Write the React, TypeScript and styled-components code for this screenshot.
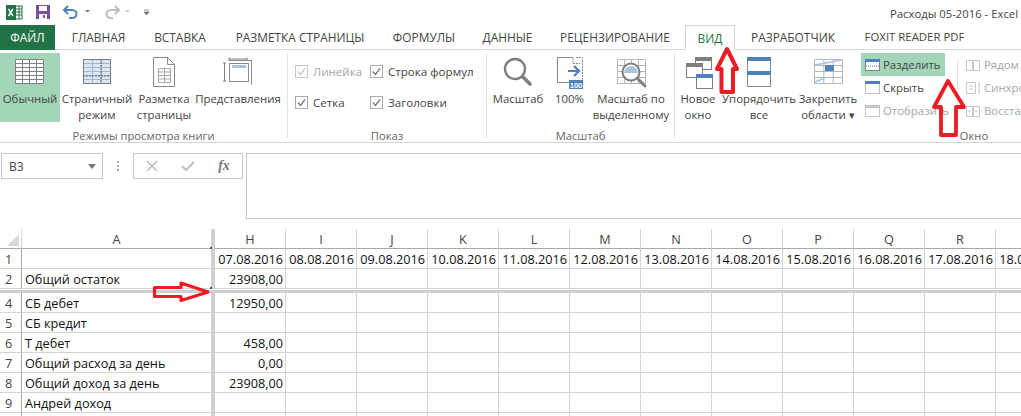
import React from "react";
import styled, { createGlobalStyle } from "styled-components";

const Global = createGlobalStyle`
  html, body { margin: 0; padding: 0; background: #fff; }
  * { box-sizing: border-box; }
`;
const Page = styled.div`
  position: relative; width: 1021px; height: 416px; overflow: hidden; background: #fff;
  font-family: "Open Sans", "Liberation Sans", sans-serif; color: #444;
`;
const TitleBar = styled.div`
  height: 25px; display: flex; align-items: center; padding: 0 3px 0 6px;
`;
const Qat = styled.svg`width: 150px; height: 24px; flex: none;`;
const DocTitle = styled.div`margin-left: auto; font-size: 11.3px; color: #444; padding-top: 1px;`;
const Tabs = styled.div`
  height: 25px; display: flex; border-bottom: 1px solid #d4d4d4; position: relative;
`;
const Tab = styled.div<{ $w: number; $fs?: number; $active?: boolean; $file?: boolean }>`
  width: ${p => p.$w}px; flex: none; text-align: center; font-size: ${p => p.$fs ?? 11.9}px; line-height: 24px;
  color: ${p => (p.$file ? "#fff" : p.$active ? "#217346" : "#444")};
  background: ${p => (p.$file ? "#217346" : "#fff")};
  ${p => p.$file && "height: 25px;"}
  ${p => p.$active && "margin-left: 4px; height: 25px; border: 1px solid #d4d4d4; border-bottom-color: #fff;"}
`;
const Ribbon = styled.div`
  height: 93px; display: flex; border-bottom: 1px solid #d4d4d4; padding-top: 3px; overflow: hidden;
`;
const Group = styled.div<{ $w: number; $last?: boolean }>`
  width: ${p => p.$w}px; flex: none; position: relative; display: flex; flex-direction: column;
  ${p => !p.$last && "border-right: 1px solid #e1e1e1; margin-bottom: 4px;"}
`;
const GroupBody = styled.div`flex: none; height: 75px; display: flex;`;
const GroupLabel = styled.div`
  text-align: center; font-size: 11.2px; line-height: 14px; color: #666; margin-top: 1px;
`;
const Big = styled.div<{ $w: number; $on?: boolean }>`
  width: ${p => p.$w}px; height: 69px; flex: none; text-align: center;
  font-size: 11.4px; line-height: 16px; color: #444; white-space: nowrap;
  background: ${p => (p.$on ? "#a3d6b8" : "transparent")};
  display: flex; flex-direction: column; align-items: center;
`;
const BigIcon = styled.svg`width: 34px; height: 36px; flex: none; margin-bottom: 2px;`;
const Checks = styled.div<{ $w: number }>`
  width: ${p => p.$w}px; flex: none; display: flex; flex-direction: column; gap: 9px; padding: 7px 0 0 7px;
`;
const CheckRow = styled.div<{ $off?: boolean }>`
  display: flex; align-items: center; gap: 5px; height: 22px; font-size: 11.6px; white-space: nowrap;
  color: ${p => (p.$off ? "#a6a6a6" : "#444")};
`;
const Box = styled.svg`width: 13px; height: 13px; flex: none;`;
const SmallCol = styled.div<{ $w: number; $ml?: number }>`
  width: ${p => p.$w}px; margin-left: ${p => p.$ml ?? 0}px; flex: none; display: flex; flex-direction: column;
`;
const Small = styled.div<{ $on?: boolean; $off?: boolean }>`
  height: 23px; display: flex; align-items: center; gap: 2px; padding-left: 3px; font-size: 11.4px; white-space: nowrap;
  background: ${p => (p.$on ? "#a3d6b8" : "transparent")};
  color: ${p => (p.$off ? "#a6a6a6" : "#444")};
`;
const SmallIcon = styled.svg`width: 17px; height: 16px; flex: none;`;
const Divider = styled.div`width: 1px; height: 62px; background: #e1e1e1; margin: 7px 0 0 12px; flex: none;`;

const FormulaBar = styled.div`
  margin-top: 10px; height: 65px; display: flex; align-items: flex-start; padding-left: 1px;
`;
const NameBox = styled.div`
  width: 102px; height: 26px; border: 1px solid #c6c6c6; display: flex; align-items: center; padding: 0 5px 0 7px;
  font-size: 12px; color: #444; justify-content: space-between;
`;
const Caret = styled.i`
  width: 0; height: 0; border: 4px solid transparent; border-top: 5px solid #777; border-bottom: 0; margin-right: 1px;
`;
const Dots = styled.div`
  width: 30px; height: 26px; display: flex; flex-direction: column; align-items: center; justify-content: center; gap: 2px;
  i { width: 2px; height: 2px; background: #a6a6a6; display: block; }
`;
const FxBox = styled.div`
  width: 110px; height: 26px; border: 1px solid #c6c6c6; display: flex;
`;
const FxBtn = styled.div`
  flex: 1; display: flex; align-items: center; justify-content: center;
  font-family: "Liberation Serif", serif; font-style: italic; font-weight: 700; font-size: 14px; color: #777;
`;
const FormulaInput = styled.div`
  margin-left: 3px; flex: 1; height: 66px; border: 1px solid #c6c6c6; border-right: 0;
`;
const Sheet = styled.div`margin-top: 11px;`;
const Row = styled.div`display: flex; height: 20px;`;
const Cell = styled.div<{ $w: number; $right?: boolean }>`
  width: ${p => p.$w}px; flex: none; padding: 0 2px 0 3px; white-space: nowrap;
  font-size: 12.7px; line-height: 21px; color: #111;
  border-right: 1px solid #d4d4d4; border-bottom: 1px solid #d4d4d4;
  text-align: ${p => (p.$right ? "right" : "left")};
`;
const ColHead = styled.div<{ $w: number }>`
  width: ${p => p.$w}px; flex: none; text-align: center; font-size: 12.7px; line-height: 20px; color: #444;
  border-right: 1px solid #d4d4d4; border-bottom: 1px solid #a9a9a9;
`;
const RowHead = styled.div`
  width: 22px; flex: none; padding-left: 5px; font-size: 12.7px; line-height: 21px; color: #444;
  border-right: 1px solid #a9a9a9; border-bottom: 1px solid #d4d4d4;
`;
const Corner = styled.div`
  width: 22px; flex: none; border-right: 1px solid #d4d4d4; border-bottom: 1px solid #a9a9a9; position: relative;
  &::after { content: ""; position: absolute; right: 2px; bottom: 2px; border: 6px solid transparent;
    border-right-color: #d9d9d9; border-bottom-color: #d9d9d9; }
`;
const VSplit = styled.div`width: 3px; flex: none; background: #d0d0d0;`;
const HSplit = styled.div`height: 4px; background: #d0d0d0; border-top: 1px solid #fff;`;
const Arrow = styled.svg`position: absolute; left: 0; top: 0; width: 1021px; height: 416px; pointer-events: none;`;

const W = [71, 71, 71, 71, 71, 71, 71, 71, 71, 71, 71, 71, 71, 71];
const COLS = ["H", "I", "J", "K", "L", "M", "N", "O", "P", "Q", "R", ""];
const DATES = ["07", "08", "09", "10", "11", "12", "13", "14", "15", "16", "17", "18"];
const TABS: [string, number][] = [["ГЛАВНАЯ", 87], ["ВСТАВКА", 76], ["РАЗМЕТКА СТРАНИЦЫ", 164], ["ФОРМУЛЫ", 84], ["ДАННЫЕ", 83], ["РЕЦЕНЗИРОВАНИЕ", 132]];

const Check = ({ off }: { off?: boolean }) => (
  <Box viewBox="0 0 13 13">
    <rect x=".5" y=".5" width="12" height="12" fill="#fff" stroke={off ? "#c6c6c6" : "#ababab"} />
    <path d="M3 6.5l2.5 3L10 3.5" fill="none" stroke={off ? "#c6c6c6" : "#777"} strokeWidth="1.3" />
  </Box>
);
const gridLines = (x0: number, y0: number, w: number, h: number, nx: number, ny: number) => {
  let d = "";
  for (let i = 0; i <= nx; i++) d += `M${x0 + (w * i) / nx} ${y0}v${h}`;
  for (let j = 0; j <= ny; j++) d += `M${x0} ${y0 + (h * j) / ny}h${w}`;
  return d;
};
const Win = ({ x, y, w, h, c = "#4f81bd", fill = "#fff" }: any) => (
  <g>
    <rect x={x + .5} y={y + .5} width={w} height={h} fill={fill} stroke="#7f7f7f" />
    <rect x={x} y={y} width={w + 1} height="4" fill={c} />
  </g>
);

export default function App() {
  const rows: [string, string, string][] = [
    ["2", "Общий остаток", "23908,00"],
  ];
  const lower: [string, string, string][] = [
    ["4", "СБ дебет", "12950,00"], ["5", "СБ кредит", ""], ["6", "Т дебет", "458,00"],
    ["7", "Общий расход за день", "0,00"], ["8", "Общий доход за день", "23908,00"], ["9", "Андрей доход", ""],
  ];
  const renderRow = ([n, a, h]: [string, string, string]) => (
    <Row key={n}>
      <RowHead>{n}</RowHead>
      <Cell $w={190}>{a}</Cell>
      <VSplit />
      <Cell $w={71} $right>{h}</Cell>
      {W.slice(1).map((w, i) => <Cell $w={w} key={i} />)}
    </Row>
  );
  return (
    <Page>
      <Global />
      <TitleBar>
        <Qat viewBox="0 0 150 24">
          <rect x="6" y="5" width="10" height="13" fill="#fff" stroke="#217346" />
          <path d="M10 8h6M10 11h6M10 14h6M13 5v13" stroke="#217346" strokeWidth="1" />
          <rect x="0" y="4" width="10" height="15" fill="#217346" />
          <path d="M2.5 8l4.5 7M7 8l-4.5 7" stroke="#fff" strokeWidth="1.5" />
          <rect x="30" y="4" width="14" height="14" fill="#7d4f9f" />
          <rect x="33" y="5" width="8" height="5" fill="#fff" />
          <rect x="33" y="13" width="8" height="5" fill="#fff" />
          <rect x="37" y="14" width="2" height="3" fill="#7d4f9f" />
          <path d="M62 5l-4 4 4 4M58 9h8c6 0 6 8 0 8h-3" fill="none" stroke="#4f81bd" strokeWidth="2" />
          <path d="M79 9h5l-2.500 2.500z" fill="#777" />
          <path d="M109 5l4 4-4 4M113 9h-8c-6 0-6 8 0 8h2" fill="none" stroke="#bdbdbd" strokeWidth="2" />
          <path d="M119 9h5l-2.500 2.500z" fill="#c6c6c6" />
          <path d="M138 9h5M138 11h5l-2.500 3z" stroke="#777" fill="#777" strokeWidth=".8" />
        </Qat>
        <DocTitle>Расходы 05-2016 - Excel</DocTitle>
      </TitleBar>
      <Tabs>
        <Tab $w={55} $file>ФАЙЛ</Tab>
        {TABS.map(([t, w]) => <Tab $w={w} key={t}>{t}</Tab>)}
        <Tab $w={50} $active>ВИД</Tab>
        <Tab $w={116}>РАЗРАБОТЧИК</Tab>
        <Tab $w={127} $fs={11.4}>FOXIT READER PDF</Tab>
      </Tabs>
      <Ribbon>
        <Group $w={288}>
          <GroupBody>
            <Big $w={60} $on>
              <BigIcon viewBox="0 0 34 36">
                <rect x="2" y="6" width="29" height="24" fill="#fff" />
                <path d={gridLines(2.5, 6.5, 28, 24, 4, 6)} stroke="#7f7f7f" fill="none" />
              </BigIcon>
              Обычный
            </Big>
            <Big $w={74}>
              <BigIcon viewBox="0 0 34 36">
                <rect x="3" y="6" width="27" height="24" fill="#dce6f2" />
                <path d={gridLines(3.5, 6.5, 27, 24, 3, 6)} stroke="#9db6d2" fill="none" />
                <rect x="3.5" y="6.5" width="27" height="24" fill="none" stroke="#7f7f7f" />
                <path d="M3 23h28M21 6v24" stroke="#666" strokeDasharray="2 1" />
              </BigIcon>
              Страничный<br />режим
            </Big>
            <Big $w={60}>
              <BigIcon viewBox="0 0 34 36">
                <path d="M6.500 4.500h14l7 7v22h-21z" fill="#fff" stroke="#8a8a8a" />
                <path d="M20.500 4.500v7h7" fill="none" stroke="#8a8a8a" />
                <path d={gridLines(11.5, 15.5, 12, 14, 2, 4)} stroke="#a6a6a6" fill="none" />
              </BigIcon>
              Разметка<br />страницы
            </Big>
            <Big $w={88}>
              <BigIcon viewBox="0 0 34 36">
                <path d="M3.500 10v18M2 10h3M2 28h3M8 6h18M8 4.500v3M26 4.500v3" stroke="#7f7f7f" fill="none" />
                <path d="M8 7.500h22.500v24" fill="none" stroke="#8a8a8a" />
                <rect x="8.500" y="10.500" width="19" height="18" fill="#fff" stroke="#8a8a8a" />
                <rect x="11" y="12" width="14" height="3" fill="#a9c1de" />
              </BigIcon>
              Представления
            </Big>
          </GroupBody>
          <GroupLabel>Режимы просмотра книги</GroupLabel>
        </Group>
        <Group $w={199}>
          <GroupBody>
            <Checks $w={75}>
              <CheckRow $off><Check off />Линейка</CheckRow>
              <CheckRow><Check />Сетка</CheckRow>
            </Checks>
            <Checks $w={120}>
              <CheckRow><Check />Строка формул</CheckRow>
              <CheckRow><Check />Заголовки</CheckRow>
            </Checks>
          </GroupBody>
          <GroupLabel>Показ</GroupLabel>
        </Group>
        <Group $w={188}>
          <GroupBody>
            <Big $w={62}>
              <BigIcon viewBox="0 0 34 36">
                <circle cx="14" cy="16" r="10" fill="#fff" stroke="#7f7f7f" strokeWidth="2.4" />
                <path d="M22 24l7 7" stroke="#7f7f7f" strokeWidth="3.6" strokeLinecap="round" />
              </BigIcon>
              Масштаб
            </Big>
            <Big $w={41}>
              <BigIcon viewBox="0 0 34 36">
                <path d="M20 4.500H4.500v25H16" fill="none" stroke="#8a8a8a" />
                <path d="M20 4.500v6h7M23 4.500h6.500v22" fill="none" stroke="#8a8a8a" strokeDasharray="2 1" />
                <path d="M15 18h10M21 13l5 5-5 5" fill="none" stroke="#4f81bd" strokeWidth="2.2" />
                <rect x="16" y="27" width="14" height="9" fill="#4f81bd" />
                <text x="23" y="34.500" fontSize="7.5" fontWeight="700" fill="#fff" textAnchor="middle" fontFamily="Liberation Sans">100</text>
              </BigIcon>
              100%
            </Big>
            <Big $w={82}>
              <BigIcon viewBox="0 0 34 36">
                <path d={gridLines(3.5, 6.5, 28, 24, 4, 4)} stroke="#b5b5b5" fill="none" />
                <circle cx="17" cy="19" r="8.500" fill="#fff" stroke="#7f7f7f" strokeWidth="2" />
                <path d="M10 20a7 7 0 0 1 14 0z" fill="#a9c4e2" />
                <path d="M24 26l7 7" stroke="#7f7f7f" strokeWidth="3" strokeLinecap="round" />
              </BigIcon>
              Масштаб по<br />выделенному
            </Big>
          </GroupBody>
          <GroupLabel>Масштаб</GroupLabel>
        </Group>
        <Group $w={598} $last>
          <GroupBody>
            <Big $w={46}>
              <BigIcon viewBox="0 0 34 36">
                <Win x={14} y={4} w={16} h={12} c="#7f7f7f" />
                <Win x={5} y={10} w={16} h={14} c="#7f7f7f" />
                <Win x={15} y={21} w={16} h={14} />
              </BigIcon>
              Новое<br />окно
            </Big>
            <Big $w={76}>
              <BigIcon viewBox="0 0 34 36">
                <rect x="5.500" y="4.500" width="23" height="14" fill="#fff" stroke="#8a8a8a" />
                <rect x="5.500" y="18.500" width="23" height="15" fill="#fff" stroke="#8a8a8a" />
                <rect x="5" y="4" width="24" height="4" fill="#4f81bd" />
                <rect x="5" y="18" width="24" height="4" fill="#4f81bd" />
              </BigIcon>
              Упорядочить<br />все
            </Big>
            <Big $w={62}>
              <BigIcon viewBox="0 0 34 36">
                <path d={gridLines(3.5, 6.5, 28, 24, 3, 4)} stroke="#b5b5b5" fill="none" />
                <rect x="14" y="12" width="9" height="6" fill="#4f81bd" />
                <path d="M4 12L30 7M4 29L14 25" stroke="#a9c4e2" strokeWidth="1.5" />
              </BigIcon>
              Закрепить<br />области ▾
            </Big>
            <SmallCol $w={84} $ml={2}>
              <Small $on>
                <SmallIcon viewBox="0 0 17 16">
                  <rect x="1.500" y="2.500" width="14" height="11" fill="#fff" stroke="#7f7f7f" />
                  <rect x="1" y="2" width="15" height="3" fill="#4f81bd" />
                  <path d="M2 9h13" stroke="#4f81bd" strokeDasharray="1 1" />
                </SmallIcon>
                Разделить
              </Small>
              <Small>
                <SmallIcon viewBox="0 0 17 16">
                  <rect x="1.500" y="2.500" width="14" height="11" fill="#fff" stroke="#7f7f7f" strokeDasharray="1 1" />
                  <rect x="1" y="1" width="15" height="3" fill="#4f81bd" />
                </SmallIcon>
                Скрыть
              </Small>
              <Small $off>
                <SmallIcon viewBox="0 0 17 16">
                  <rect x="1.500" y="2.500" width="14" height="11" fill="#fff" stroke="#c6c6c6" />
                  <rect x="1" y="2" width="15" height="3" fill="#c6c6c6" />
                </SmallIcon>
                Отобразить
              </Small>
            </SmallCol>
            <Divider />
            <SmallCol $w={70} $ml={4}>
              <Small $off>
                <SmallIcon viewBox="0 0 17 16"><path d="M1.500 3.500h6v10h-6zM8.500 3.500h6v10h-6z" fill="#fff" stroke="#c6c6c6" /></SmallIcon>
                Рядом
              </Small>
              <Small $off>
                <SmallIcon viewBox="0 0 17 16"><path d="M1.500 2.500h9v11h-9zM4 6h4M4 9h4M14 2v12" fill="#fff" stroke="#c6c6c6" /></SmallIcon>
                Синхронно
              </Small>
              <Small $off>
                <SmallIcon viewBox="0 0 17 16"><path d="M1.500 3.500h6v10h-6zM8.500 3.500h6v10h-6zM3 8h3M10 8h3" fill="#fff" stroke="#c6c6c6" /></SmallIcon>
                Восстановить
              </Small>
            </SmallCol>
          </GroupBody>
          <GroupLabel>Окно</GroupLabel>
        </Group>
      </Ribbon>
      <FormulaBar>
        <NameBox>B3<Caret /></NameBox>
        <Dots><i /><i /><i /></Dots>
        <FxBox>
          <FxBtn><svg width="12" height="12" viewBox="0 0 12 12"><path d="M1 1l10 10M11 1L1 11" stroke="#c0c0c0" strokeWidth="1.6" /></svg></FxBtn>
          <FxBtn><svg width="14" height="12" viewBox="0 0 14 12"><path d="M1 6l4 4 8-8" fill="none" stroke="#c0c0c0" strokeWidth="2.2" /></svg></FxBtn>
          <FxBtn>fx</FxBtn>
        </FxBox>
        <FormulaInput />
      </FormulaBar>
      <Sheet>
        <Row>
          <Corner />
          <ColHead $w={190}>A</ColHead>
          <VSplit />
          {COLS.map((c, i) => <ColHead $w={W[i]} key={i}>{c}</ColHead>)}
        </Row>
        <Row>
          <RowHead>1</RowHead>
          <Cell $w={190} />
          <VSplit />
          {DATES.map((d, i) => <Cell $w={W[i]} $right key={d}>{d}.08.2016</Cell>)}
        </Row>
        {rows.map(renderRow)}
        <HSplit />
        {lower.map(renderRow)}
        {renderRow(["", "", ""])}
      </Sheet>
      <Arrow viewBox="0 0 1021 416">
        <rect x="210" y="247" width="2" height="2" fill="#217346" />
        <rect x="210" y="287" width="2" height="2" fill="#217346" />
        <path d="M727 49L737 69H733V92H721.500V69H717Z" fill="none" stroke="#ed1c24" strokeWidth="4" strokeLinejoin="round" />
        <path d="M948 81L964 107H956V135H941V107H934Z" fill="none" stroke="#ed1c24" strokeWidth="3.8" strokeLinejoin="round" />
        <path d="M154.500 287.500H181V283L208 292L181 300.500V296.500H154.500Z" fill="none" stroke="#ed1c24" strokeWidth="3.200" strokeLinejoin="round" />
      </Arrow>
    </Page>
  );
}
